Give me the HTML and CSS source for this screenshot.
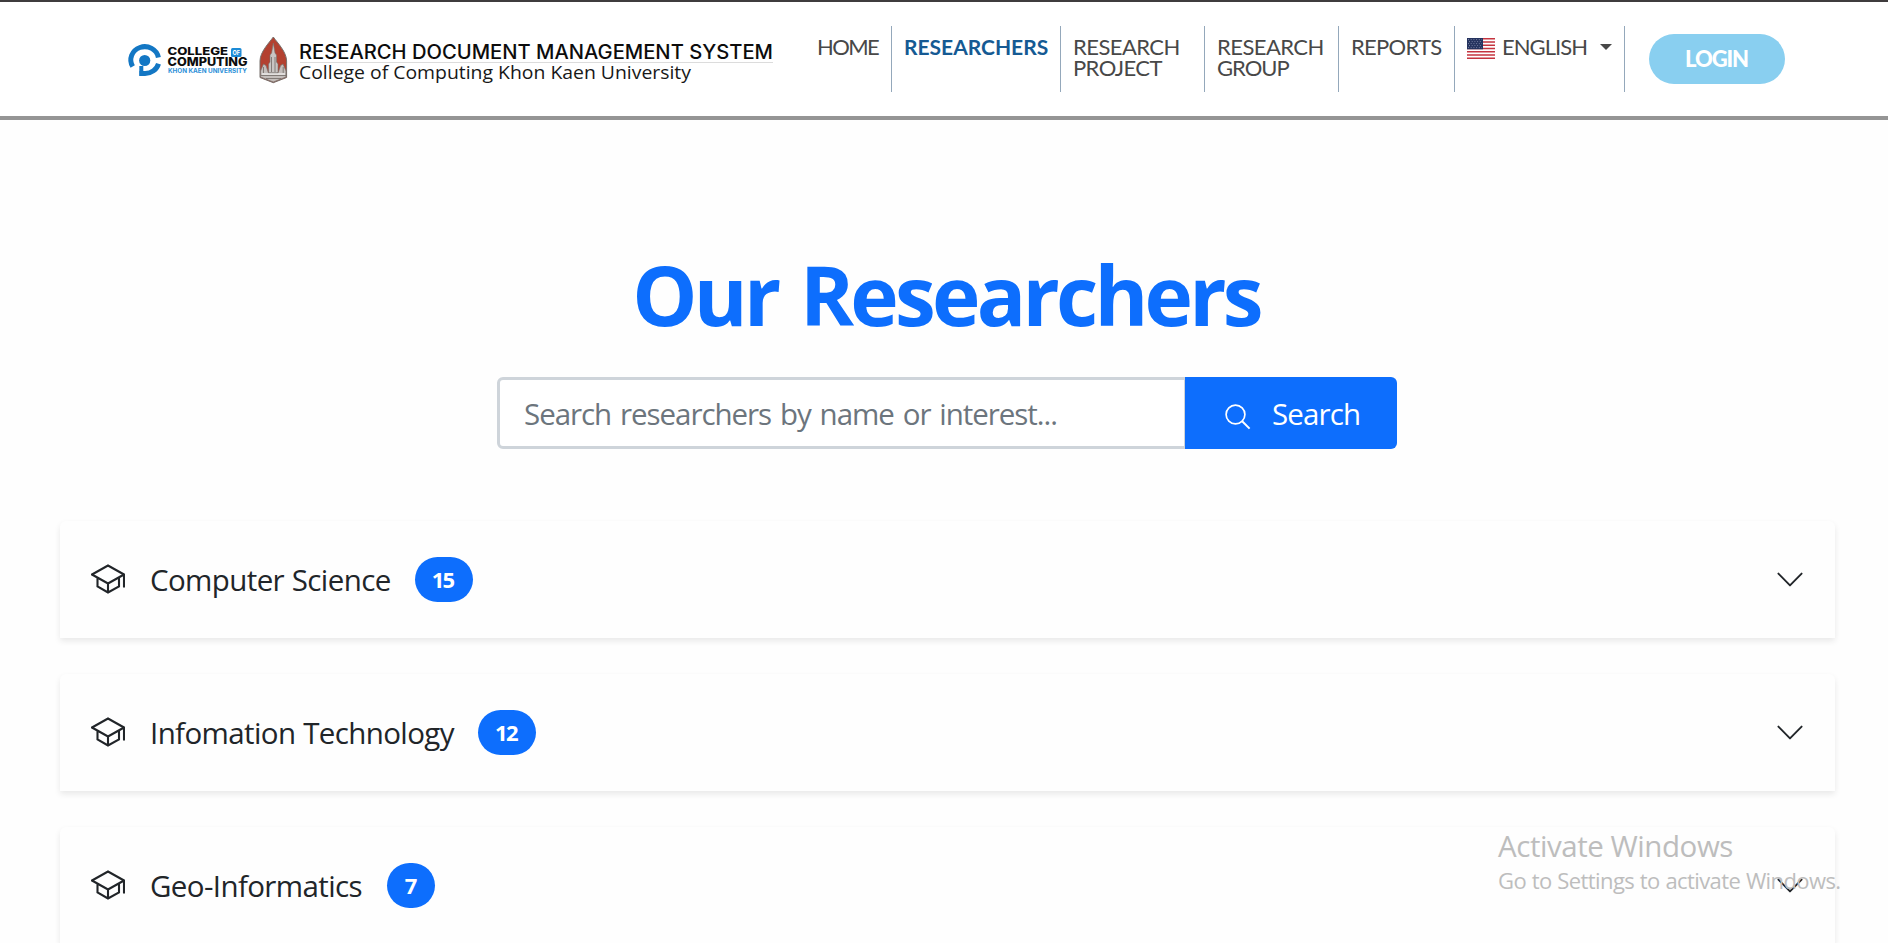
FILE: index.html
```html
<!DOCTYPE html>
<html lang="en">
<head>
<meta charset="utf-8">
<title>Our Researchers</title>
<link rel="stylesheet" href="styles.css">
</head>
<body>
<svg width="0" height="0" class="defs">
  <symbol id="cap" viewBox="0 0 34 30">
    <path d="M1 10.5 17 1.5 33 10.5 17 19.5ZM6.5 13.5V22.5L17 28.5 28 22.5V13.5M17 19.5V28.5M33 10.5V23.5" fill="none" stroke="currentColor" stroke-width="2.1" stroke-linejoin="miter"/>
  </symbol>
  <symbol id="chev" viewBox="0 0 26 16">
    <path d="M1.4 1.6 13 13.4 24.6 1.6" fill="none" stroke="currentColor" stroke-width="1.9" stroke-linecap="round" stroke-linejoin="round"/>
  </symbol>
</svg>
<header class="header">
  <a class="brand">
    <svg width="652" height="50" viewBox="126 35 652 50">
      <circle cx="144.700" cy="60.500" r="5.600" fill="#1377c4"/>
      <g fill="none" stroke="#1377c4" stroke-width="5">
        <path d="M132.700 66.500A13.900 13.200 0 1 1 158.400 57.500"/>
        <path d="M158.500 63.700A13.900 13.200 0 0 1 145 73.400H139.500"/>
        <path d="M141.300 66V75.900" stroke-width="4"/>
      </g>
      <g font-family="Inter, sans-serif" font-weight="800" fill="#0c0c0c">
        <text x="167.500" y="55.400" font-size="10.500" textLength="60.500" lengthAdjust="spacingAndGlyphs">COLLEGE</text>
        <text x="167.500" y="66.300" font-size="11.500" textLength="80" lengthAdjust="spacingAndGlyphs">COMPUTING</text>
        <text x="168" y="73.300" font-size="6.200" font-weight="700" fill="#2b8fd8" textLength="79" lengthAdjust="spacingAndGlyphs">KHON KAEN UNIVERSITY</text>
      </g>
      <rect x="231" y="48" width="10.500" height="9" rx="1.500" fill="#1c8bd6"/>
      <text x="232.500" y="55" font-family="Inter, sans-serif" font-size="6.500" font-weight="700" fill="#fff" textLength="7.500" lengthAdjust="spacingAndGlyphs">OF</text>
      <path d="M273.300 37C269 43 260 52 260 61V77.500L273.300 82.700 286.600 77.500V61C286.600 52 277.600 43 273.300 37Z" fill="#b34130" stroke="#77706c" stroke-width="1"/>
      <path d="M273.300 43 275 53 276.500 55V62L278 64V73H268.600V64L270 62V55L271.600 53Z" fill="#c9c5c3" stroke="#77706c" stroke-width=".6"/>
      <path d="M260.500 71 263.500 64 266 65.500 268.500 73H278L280.600 65.500 283 64 286 71V77L273.300 82 260.500 77Z" fill="#c4bebb" stroke="#77706c" stroke-width=".7"/>
      <path d="M261 75.500H286M266 78.500H281M263.500 67V73M283.200 67V73M271.500 57V72M275 57V72" stroke="#716966" stroke-width=".8" fill="none"/>
      <path d="M262 74H285" stroke="#fff" stroke-width="1"/>
      <path d="M300 62.500H773" stroke="#dcdcdc"/>
      <text x="299" y="59" font-family="Inter, sans-serif" font-size="19.500" font-weight="500" fill="#0c0c0c" textLength="474" lengthAdjust="spacingAndGlyphs">RESEARCH DOCUMENT MANAGEMENT SYSTEM</text>
      <text x="299" y="79" font-family="Open Sans, sans-serif" font-size="18" fill="#181818" textLength="392" lengthAdjust="spacingAndGlyphs">College of Computing Khon Kaen University</text>
    </svg>
  </a>
  <nav class="nav">
    <a class="item home">HOME</a>
    <a class="item researchers">RESEARCHERS</a>
    <a class="item project">RESEARCH<br><span>PROJECT</span></a>
    <a class="item group">RESEARCH<br><span class="tight">GROUP</span></a>
    <a class="item reports">REPORTS</a>
    <a class="item lang">
      <svg class="flag" width="28" height="21" viewBox="0 0 28 21">
        <path fill="#fff" d="M0 0H28V21H0Z"/>
        <path stroke="#c5343f" stroke-width="1.500" d="M0 .8H28M0 4H28M0 7.200H28M0 10.500H28M0 13.700H28M0 17H28M0 20.200H28"/>
        <path fill="#25335f" d="M0 0H16V11.300H0Z"/>
        <path stroke="#8c94b4" stroke-width=".8" stroke-dasharray="1 1.700" d="M1 1.600H15M2 3.600H15M1 5.600H15M2 7.600H15M1 9.600H15"/>
      </svg>
      <span>ENGLISH</span><i class="caret"></i>
    </a>
  </nav>
  <a class="login">LOGIN</a>
</header>
<main class="main">
  <h1 class="title">Our Researchers</h1>
  <form class="search">
    <input class="input" type="text" placeholder="Search researchers by name or interest...">
    <button class="button" type="button">
      <svg width="26" height="26" viewBox="0 0 26 26" fill="none" stroke="#fff" stroke-width="1.700"><circle cx="10.500" cy="10.500" r="9.400"/><path d="M17.200 17.200 24.600 24.600" stroke-width="2"/></svg>
      <span>Search</span>
    </button>
  </form>
  <section class="list">
    <div class="card"><svg class="cap"><use href="#cap"/></svg><span class="name">Computer Science</span><span class="badge">15</span><svg class="chev"><use href="#chev"/></svg></div>
    <div class="card"><svg class="cap"><use href="#cap"/></svg><span class="name">Infomation Technology</span><span class="badge">12</span><svg class="chev"><use href="#chev"/></svg></div>
    <div class="card"><svg class="cap"><use href="#cap"/></svg><span class="name">Geo-Informatics</span><span class="badge single">7</span><svg class="chev"><use href="#chev"/></svg></div>
  </section>
</main>
<aside class="watermark">
  <div class="wm-title">Activate Windows</div>
  <div class="wm-text">Go to Settings to activate Windows.</div>
</aside>
</body>
</html>
```
FILE: styles.css
```css
* { box-sizing: border-box; }
html, body { margin: 0; height: 943px; overflow: hidden; }
body { background: #fefefe; color: #212529; font-family: "Open Sans", "Noto Sans", sans-serif; }
.defs { position: absolute; }

.header { display: flex; align-items: flex-start; height: 120px; padding: 24px 103px 0 126px; border-top: 2px solid #3f3c3d; border-bottom: 4px solid #959595; background: #fff; }
.brand { flex: none; width: 680px; padding-top: 9px; }
.brand svg { display: block; }
.nav { display: flex; flex: none; }
.item { height: 66px; padding: 10px 0 0 12px; border-right: 1px solid #94a8bb; font: 22px/21px Lato, sans-serif; letter-spacing: -.55px; color: #484848; white-space: nowrap; }
.home { width: 86px; padding-left: 11px; letter-spacing: -1.6px; }
.researchers { width: 169px; font-size: 21px; font-weight: 700; letter-spacing: 0; color: #155a93; }
.project { width: 144px; }
.project span { letter-spacing: -.6px; }
.group { width: 134px; }
.tight { letter-spacing: -1px; }
.reports { width: 116px; letter-spacing: -.7px; }
.lang { display: flex; width: 170px; letter-spacing: -.95px; }
.lang span { margin-left: 7px; }
.flag { margin-top: 2px; }
.caret { margin: 8px 0 0 13px; width: 12px; height: 6px; border: 6px solid transparent; border-top-color: #484848; border-bottom: 0; }
.login { flex: none; width: 136px; height: 50px; margin: 8px 0 0 24px; padding-right: 1px; border-radius: 25px; background: #89cff0; color: #fff; font: 900 22px/50px Lato, sans-serif; letter-spacing: -1.1px; text-align: center; }

.main { padding: 125px 53px 0 60px; }
.title { margin: 0; padding-right: 3px; font-size: 82px; line-height: 98px; font-weight: 700; letter-spacing: -3.75px; word-spacing: 5px; text-align: center; color: #0d6efd; }
.search { display: flex; width: 900px; height: 72px; margin: 34px 0 0 437px; }
.input { width: 688px; padding: 0 0 0 24px; border: 3px solid #ced4da; border-right-width: 1px; border-radius: 6px 0 0 6px; background: #fff; font: 29.5px "Open Sans", sans-serif; letter-spacing: -1.05px; word-spacing: 2.3px; }
.input::placeholder { color: #6c757d; opacity: 1; }
.button { display: flex; align-items: center; width: 212px; padding: 0 0 0 40px; border: 0; border-radius: 0 6px 6px 0; background: #0d6efd; color: #fff; font: 29.5px "Open Sans", sans-serif; letter-spacing: -.85px; }
.button svg { margin: 8px 21px 0 0; }

.list { display: flex; flex-direction: column; gap: 36px; margin-top: 72px; }
.card { display: flex; flex: none; align-items: center; height: 117px; padding: 0 31px; border-radius: 6px 6px 0 0; background: #fefefe; box-shadow: 0 3px 6px rgba(0, 0, 0, .09); }
.cap { flex: none; width: 34px; height: 30px; margin: 0 25px 1px 0; }
.name { font-size: 29.5px; line-height: 40px; letter-spacing: -.61px; word-spacing: .7px; }
.badge { width: 58px; height: 45px; margin-left: 24px; border-radius: 22.5px; background: #0d6efd; color: #fff; font-size: 22px; line-height: 45px; font-weight: 700; letter-spacing: -1.6px; text-align: center; padding-right: 2px; }
.single { width: 48px; margin-left: 25px; letter-spacing: 0; padding-right: 0; }
.chev { flex: none; width: 26px; height: 16px; margin: 0 1px 0 auto; }

.watermark { position: absolute; left: 1498px; top: 825px; color: #bdbdbd; white-space: nowrap; }
.wm-title { font-size: 29.5px; line-height: 42px; letter-spacing: -.45px; }
.wm-text { font-size: 22px; line-height: 26px; letter-spacing: -.6px; word-spacing: .6px; }
```
